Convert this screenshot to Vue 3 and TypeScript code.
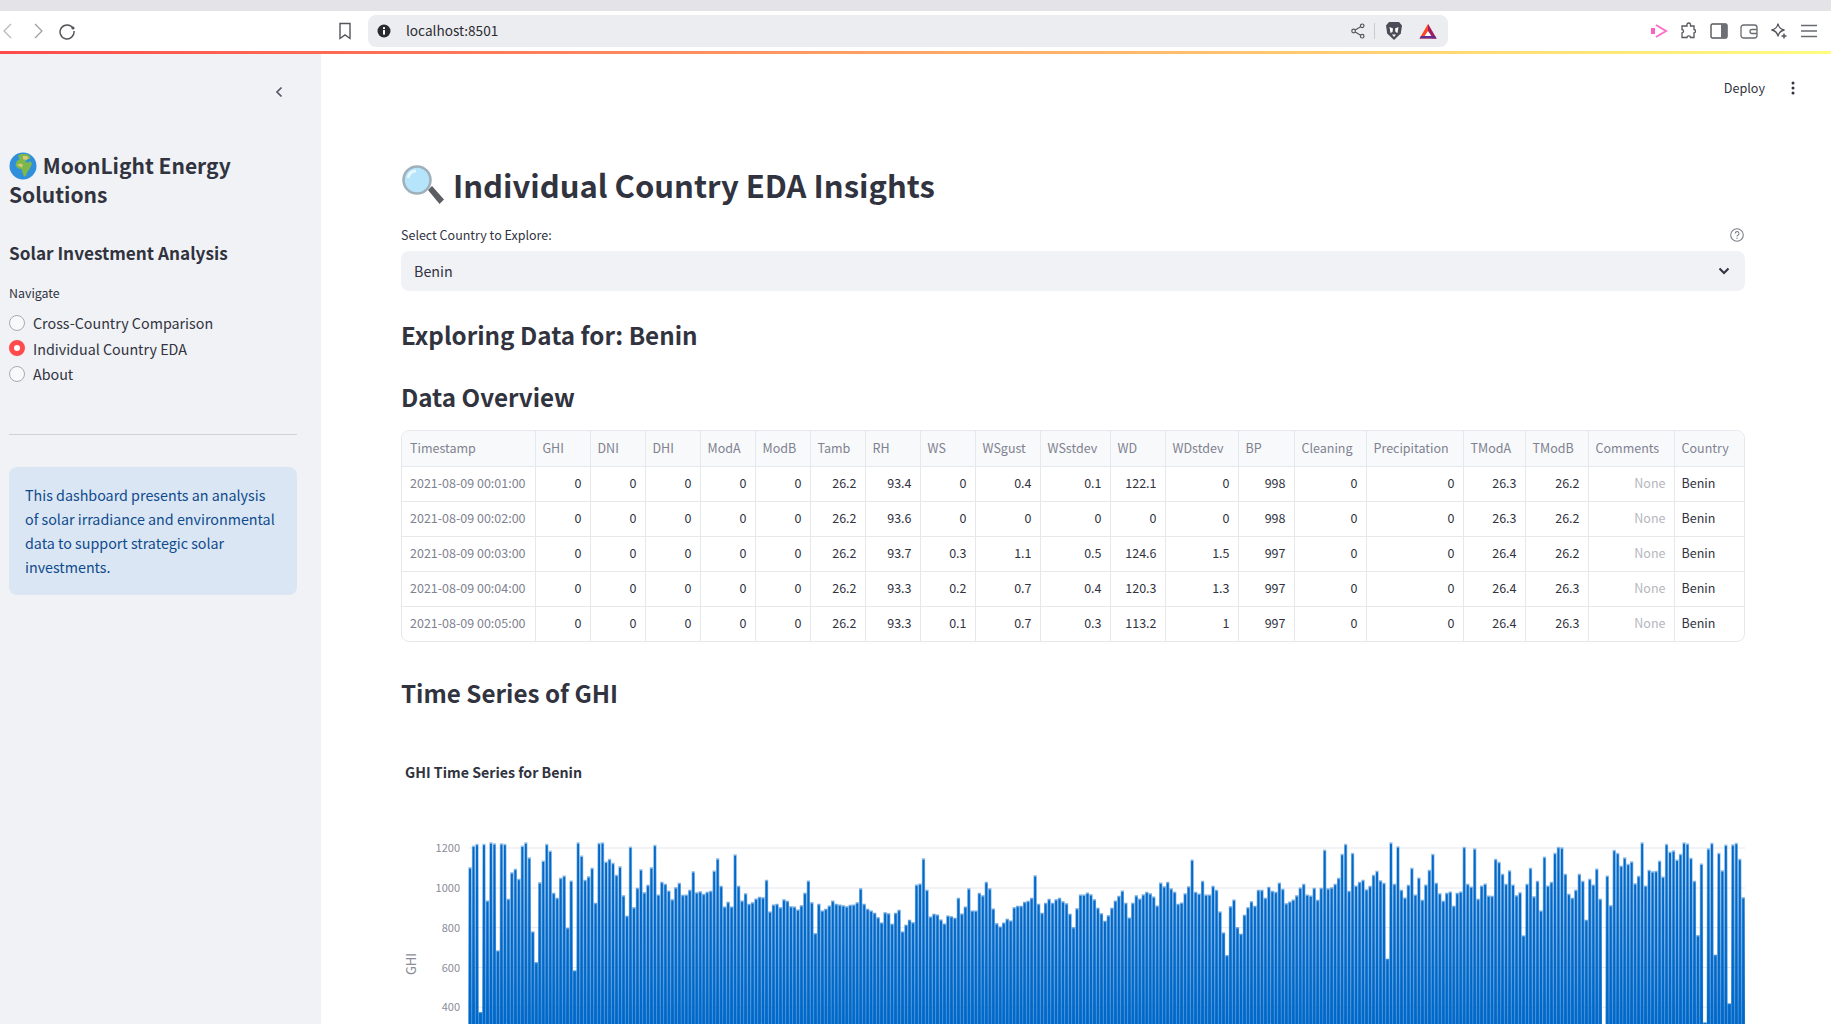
<template>
  <div class="page">
    <div class="tab-strip"></div>
    <header class="toolbar">
      <svg class="tb-icon nav-first" width="16" height="18" viewBox="0 0 16 18"><path d="M11 2 4 9l7 7" fill="none" stroke="#b5b6bb" stroke-width="1.2" /></svg>
      <svg class="tb-icon nav-next" width="16" height="18" viewBox="0 0 16 18"><path d="m5 2 7 7-7 7" fill="none" stroke="#9b9ca1" stroke-width="1.2" /></svg>
      <svg class="tb-icon nav-reload" width="18" height="18" viewBox="0 0 18 18"><path d="M15 6.2A7 7 0 1 0 16 9" fill="none" stroke="#55565c" stroke-width="1.5" /><circle cx="15" cy="6" r="1.6" fill="#55565c" /></svg>
      <svg class="tb-icon nav-mark" width="14" height="18" viewBox="0 0 14 18"><path d="M2 1.5h10v15l-5-3.6-5 3.6z" fill="none" stroke="#55565c" stroke-width="1.4" /></svg>
      <div class="url-bar">
        <svg width="14" height="14" viewBox="0 0 14 14"><circle cx="7" cy="7" r="6.5" fill="#2a2b30" /><rect x="6" y="6" width="2" height="4.6" fill="#fff" /><rect x="6" y="3.2" width="2" height="1.8" fill="#fff" /></svg>
        <span class="url-text">localhost:8501</span>
        <svg class="share" width="14" height="16" viewBox="0 0 14 16"><g fill="none" stroke="#55565c" stroke-width="1.2"><circle cx="2.6" cy="8" r="1.8" /><circle cx="11.2" cy="2.8" r="1.8" /><circle cx="11.2" cy="13.2" r="1.8" /><path d="m4.2 7 5.4-3.2M4.2 9l5.4 3.2" /></g></svg>
        <span class="url-sep"></span>
        <svg class="lion" width="18" height="20" viewBox="0 0 18 20"><path d="M4 1h10l3 3.5-1.2 8L9 19 2.2 12.5 1 4.5z" fill="#4a4c57" /><path d="M4.500 6 8 7.500 7.500 11 5.500 12zM13.500 6 10 7.500l.5 3.500 2 1zM7 13.500h4l-2 2.500z" fill="#fff" /></svg>
        <svg class="bat" width="18" height="17" viewBox="0 0 18 17"><path d="M9 1 0.5 15.500h17z" fill="#ff4724" /><path d="M9 1 17.500 15.500H13L9 8.500z" fill="#9e1f63" /><path d="M0.500 15.500h17L16 13H2z" fill="#662d91" /><path d="M9 8 5.600 13h6.800z" fill="#fff" /></svg>
      </div>
      <div class="tb-right">
        <svg width="18" height="16" viewBox="0 0 18 16"><rect x="1" y="5" width="4" height="6" fill="#ff5fc0" /><path d="M6 2 16 8 6 14" fill="none" stroke="#ff6fc8" stroke-width="2" /></svg>
        <svg width="18" height="18" viewBox="0 0 18 18"><path d="M7 2.500c0-2 3.500-2 3.500 0V4H14v3.500c2 0 2 3.500 0 3.500v4.500H10.500c0-2.200-3.500-2.200-3.500 0H2V11c2 0 2-3.500 0-3.500V4h5z" fill="none" stroke="#55565c" stroke-width="1.3" /></svg>
        <svg width="18" height="16" viewBox="0 0 18 16"><rect x="1" y="1" width="16" height="14" rx="1.500" fill="#fff" stroke="#55565c" stroke-width="1.4" /><rect x="11" y="1" width="6" height="14" fill="#6e6f75" /></svg>
        <svg width="18" height="16" viewBox="0 0 18 16"><rect x="1" y="2" width="16" height="13" rx="2.500" fill="none" stroke="#6a6b71" stroke-width="1.3" /><path d="M17 6.500h-5a2 2 0 0 0 0 4h5" fill="none" stroke="#6a6b71" stroke-width="1.3" /></svg>
        <svg width="18" height="18" viewBox="0 0 18 18"><path d="M8 1.500c.6 4 2.400 5.800 6.500 6.500-4 .7-5.900 2.500-6.500 6.500C7.400 10.500 5.500 8.700 1.500 8 5.500 7.300 7.400 5.500 8 1.500z" fill="none" stroke="#55565c" stroke-width="1.3" /><path d="M14 11.500v5M11.500 14h5" stroke="#55565c" stroke-width="1.5" /></svg>
        <svg width="18" height="14" viewBox="0 0 18 14"><path d="M1 1.500h16M1 7h16M1 12.500h16" stroke="#6a6b71" stroke-width="1.6" /></svg>
      </div>
    </header>
    <div class="decoration"></div>

    <div class="app">
      <aside class="sidebar">
        <div class="collapse-row">
          <svg width="12" height="14" viewBox="0 0 12 14"><path d="M8.500 2.500 4 7l4.500 4.500" fill="none" stroke="#555867" stroke-width="1.7" /></svg>
        </div>
        <h2 class="brand">
          <svg class="globe" width="28" height="28" viewBox="0 0 28 28">
            <circle cx="14" cy="14" r="13.500" fill="#2f8fdb" />
            <path d="M9 3.500c3-1.800 8-2 11.500 0l1 3-3.500 1-2 2.500 3.500.5 2-1.500 1.500 3-2.500 5-2.500 3.500-1 3.500-2 .5-1.500-4-1-3.500-3.500-.5-2.500-3 1-4 3-2.500-1-2.500z" fill="#7fb84a" />
            <path d="M14 4h4l1.500 2.500-2.500 1.500-3-1zM8 13l3-1.500 3 1-1 3z" fill="#d9c77a" />
          </svg>
          MoonLight Energy Solutions
        </h2>
        <h3 class="subtitle">Solar Investment Analysis</h3>
        <div class="nav-label">Navigate</div>
        <label v-for="item in navItems" :key="item" class="radio-row">
          <span class="radio" :class="{ on: item === activeNav }"></span>
          {{ item }}
        </label>
        <hr class="side-rule" />
        <div class="info-box">
          This dashboard presents an analysis of solar irradiance and environmental data to support strategic solar investments.
        </div>
      </aside>

      <main class="main">
        <div class="top-actions">
          <span class="deploy">Deploy</span>
          <svg width="4" height="14" viewBox="0 0 4 14"><circle cx="2" cy="2" r="1.5" fill="#31333f" /><circle cx="2" cy="7" r="1.5" fill="#31333f" /><circle cx="2" cy="12" r="1.5" fill="#31333f" /></svg>
        </div>

        <h1 class="page-title">
          <svg width="44" height="40" viewBox="0 0 44 40">
            <path d="m27 25 4-4 12 13.500-4.500 4.500z" fill="#5a5d62" />
            <circle cx="16" cy="15" r="13.500" fill="#b6e4fb" stroke="#9fb0ba" stroke-width="2.5" />
            <path d="M7 13c1-4 4-7 8-7" fill="none" stroke="#e6f7ff" stroke-width="3" />
          </svg>
          Individual Country EDA Insights
        </h1>

        <div class="select-label">
          <span>Select Country to Explore:</span>
          <svg width="14" height="14" viewBox="0 0 14 14"><circle cx="7" cy="7" r="6.300" fill="none" stroke="#7d7f88" stroke-width="1.1" /><path d="M5.200 5.500a1.900 1.900 0 1 1 2.700 1.700c-.6.300-.9.700-.9 1.300" fill="none" stroke="#7d7f88" stroke-width="1.1" /><circle cx="7" cy="10.300" r=".7" fill="#7d7f88" /></svg>
        </div>
        <div class="select-box">
          <span>Benin</span>
          <svg width="12" height="8" viewBox="0 0 12 8"><path d="m1.500 1.500 4.500 4.500 4.500-4.500" fill="none" stroke="#31333f" stroke-width="2" /></svg>
        </div>

        <h2 class="section first">Exploring Data for: Benin</h2>
        <h2 class="section second">Data Overview</h2>

        <div class="table-wrap">
          <table class="data-table">
            <colgroup>
              <col v-for="c in columns" :key="c.name" :style="{ width: c.width + 'px' }" />
            </colgroup>
            <thead>
              <tr>
                <th v-for="c in columns" :key="c.name">{{ c.name }}</th>
              </tr>
            </thead>
            <tbody>
              <tr v-for="row in rows" :key="row[0]">
                <td v-for="(cell, i) in row" :key="i" :class="cellClass(i, cell)">{{ cell }}</td>
              </tr>
            </tbody>
          </table>
        </div>

        <h2 class="section third">Time Series of GHI</h2>
        <div class="chart-title">GHI Time Series for Benin</div>

        <svg class="chart" width="1344" height="240" viewBox="0 0 1344 240">
          <defs>
            <linearGradient id="paleBar" gradientUnits="userSpaceOnUse" x1="0" y1="30" x2="0" y2="224">
              <stop offset="0" stop-color="#0068c9" stop-opacity="0.35" />
              <stop offset="0.5" stop-color="#0068c9" stop-opacity="0.65" />
              <stop offset="1" stop-color="#0068c9" stop-opacity="0.95" />
            </linearGradient>
          </defs>
          <line v-for="t in ticks" :key="t.label" x1="68" x2="1344" :y1="t.y" :y2="t.y" class="grid" />
          <text v-for="t in ticks" :key="'l' + t.label" x="59" :y="t.y + 4" text-anchor="end" class="tick">{{ t.label }}</text>
          <text class="axis" transform="translate(15 163) rotate(-90)" text-anchor="middle">GHI</text>
          <path :d="paleBars" fill="url(#paleBar)" />
          <path :d="solidBars" fill="#0068c9" />
        </svg>
      </main>
    </div>
  </div>
</template>

<script setup lang="ts">
import { computed } from 'vue'

const navItems = ['Cross-Country Comparison', 'Individual Country EDA', 'About']
const activeNav = 'Individual Country EDA'

const columns = [
  { name: 'Timestamp', width: 133 },
  { name: 'GHI', width: 55 },
  { name: 'DNI', width: 55 },
  { name: 'DHI', width: 55 },
  { name: 'ModA', width: 55 },
  { name: 'ModB', width: 55 },
  { name: 'Tamb', width: 55 },
  { name: 'RH', width: 55 },
  { name: 'WS', width: 55 },
  { name: 'WSgust', width: 65 },
  { name: 'WSstdev', width: 70 },
  { name: 'WD', width: 55 },
  { name: 'WDstdev', width: 73 },
  { name: 'BP', width: 56 },
  { name: 'Cleaning', width: 72 },
  { name: 'Precipitation', width: 97 },
  { name: 'TModA', width: 62 },
  { name: 'TModB', width: 63 },
  { name: 'Comments', width: 86 },
  { name: 'Country', width: 70 }
]

const rows = [
  ['2021-08-09 00:01:00', '0', '0', '0', '0', '0', '26.2', '93.4', '0', '0.4', '0.1', '122.1', '0', '998', '0', '0', '26.3', '26.2', 'None', 'Benin'],
  ['2021-08-09 00:02:00', '0', '0', '0', '0', '0', '26.2', '93.6', '0', '0', '0', '0', '0', '998', '0', '0', '26.3', '26.2', 'None', 'Benin'],
  ['2021-08-09 00:03:00', '0', '0', '0', '0', '0', '26.2', '93.7', '0.3', '1.1', '0.5', '124.6', '1.5', '997', '0', '0', '26.4', '26.2', 'None', 'Benin'],
  ['2021-08-09 00:04:00', '0', '0', '0', '0', '0', '26.2', '93.3', '0.2', '0.7', '0.4', '120.3', '1.3', '997', '0', '0', '26.4', '26.3', 'None', 'Benin'],
  ['2021-08-09 00:05:00', '0', '0', '0', '0', '0', '26.2', '93.3', '0.1', '0.7', '0.3', '113.2', '1', '997', '0', '0', '26.4', '26.3', 'None', 'Benin']
]

const cellClass = (i: number, cell: string) => {
  if (i === 0) return 'stamp'
  if (i === 19) return 'text'
  if (cell === 'None') return 'none'
  return ''
}

const ticks = [
  { label: '1200', y: 47 },
  { label: '1000', y: 87 },
  { label: '800', y: 126.7 },
  { label: '600', y: 166.5 },
  { label: '400', y: 206.2 }
]

// daily peak tops, measured off the plot at 3x
const tops = [
  140, 75, 70, 575, 70, 240, 65, 68, 390, 68, 70, 235, 155, 145, 175, 75, 65, 110, 333, 425, 185, 120, 70, 90, 217, 232, 172, 165, 322, 180, 450,
  65, 105, 178, 167, 142, 247, 67, 65, 123, 115, 127, 163, 137, 224, 286, 78, 260, 202, 146, 215, 193, 140, 73, 222, 184, 190, 210, 236, 200, 187,
  223, 222, 208, 152, 215, 212, 220, 214, 211, 150, 113, 196, 258, 244, 258, 101, 196, 240, 218, 250, 245, 234, 229, 230, 178, 273, 252, 250, 260,
  236, 241, 257, 258, 267, 254, 217, 180, 245, 338, 250, 270, 265, 255, 240, 250, 252, 254, 257, 253, 252, 245, 203, 250, 265, 270, 277, 290, 306,
  275, 278, 310, 277, 268, 333, 313, 298, 305, 192, 189, 113, 208, 288, 280, 282, 297, 309, 285, 287, 292, 232, 279, 258, 203, 270, 270, 217, 224,
  184, 203, 264, 308, 318, 306, 295, 300, 260, 256, 256, 244, 241, 232, 164, 250, 277, 247, 235, 247, 236, 232, 242, 248, 280, 320, 263, 222, 222,
  216, 221, 236, 262, 278, 301, 284, 262, 240, 226, 210, 247, 291, 247, 224, 234, 221, 214, 218, 228, 255, 186, 197, 184, 203, 214, 250, 246, 218,
  197, 117, 214, 219, 181, 222, 222, 196, 208, 273, 336, 404, 257, 237, 320, 340, 283, 260, 242, 256, 208, 208, 232, 199, 211, 214, 186, 205, 248,
  243, 237, 224, 201, 190, 222, 225, 202, 238, 202, 87, 203, 200, 190, 172, 100, 70, 211, 97, 195, 184, 178, 206, 196, 163, 151, 179, 187, 415, 65,
  190, 77, 208, 231, 193, 142, 222, 171, 238, 192, 148, 100, 187, 218, 241, 217, 213, 256, 217, 213, 79, 190, 198, 83, 235, 195, 189, 225, 226, 115,
  124, 160, 190, 149, 192, 224, 215, 345, 190, 142, 227, 181, 270, 108, 195, 184, 97, 79, 80, 160, 220, 232, 208, 160, 181, 298, 175, 192, 144, 235,
  612, 165, 254, 88, 97, 135, 110, 130, 122, 188, 166, 65, 195, 148, 152, 151, 120, 168, 70, 93, 89, 117, 100, 65, 68, 112, 181, 344, 129, 606, 83,
  67, 403, 97, 149, 72, 549, 71, 67, 115, 230
]

const barPath = (width: number, lift: number) => {
  const step = (1342.3 - 69) / (tops.length - 1)
  return tops
    .map((v, i) => {
      const x = 69 + i * step - width / 2
      const y = 20 + v / 3 - lift
      return `M${x.toFixed(2)} ${y.toFixed(1)}h${width}V240h-${width}z`
    })
    .join('')
}

const paleBars = computed(() => barPath(3.3, 0.5))
const solidBars = computed(() => barPath(1.9, -1))
</script>

<style>
html,
body {
  margin: 0;
  height: 100%;
  overflow: hidden;
  background: #fff;
}
</style>

<style scoped>
.page {
  height: 1024px;
  display: flex;
  flex-direction: column;
  overflow: hidden;
  font-family: "Noto Sans CJK SC", "Noto Sans", sans-serif;
  color: #31333f;
}

.tab-strip {
  height: 11px;
  background: #e3e3e8;
}

.toolbar {
  height: 40px;
  background: #fff;
  display: flex;
  align-items: center;
  flex: none;
}

.tb-icon {
  flex: none;
}

.nav-next {
  margin-left: 14px;
}

.nav-reload {
  margin-left: 12px;
}

.nav-mark {
  margin-left: 262px;
}

.url-bar {
  margin-left: 16px;
  width: 1080px;
  height: 32px;
  border-radius: 8px;
  background: #ecedf1;
  display: flex;
  align-items: center;
  padding-left: 9px;
  box-sizing: border-box;
  flex: none;
}

.url-text {
  margin-left: 15px;
  padding-bottom: 1px;
  font-size: 13.6px;
  color: #2a2b30;
  line-height: 19px;
}

.share {
  margin-left: auto;
}

.url-sep {
  width: 1px;
  height: 16px;
  background: #c9cacf;
  margin: 0 10px 0 9px;
}

.lion {
  margin-right: 16px;
}

.bat {
  margin-right: 11px;
}

.tb-right {
  margin-left: auto;
  width: 168px;
  margin-right: 13px;
  display: flex;
  justify-content: space-between;
  align-items: center;
}

.decoration {
  height: 3px;
  flex: none;
  background: linear-gradient(90deg, #ff4b4b, #fffd80);
}

.app {
  flex: 1;
  display: flex;
  min-height: 0;
}

.sidebar {
  width: 321px;
  flex: none;
  box-sizing: border-box;
  background: #f0f2f6;
  padding: 0 24px 0 9px;
}

.collapse-row {
  height: 76px;
  display: flex;
  align-items: center;
  justify-content: flex-end;
  margin-right: 12px;
}

.brand {
  margin: 21px 0 0;
  font-size: 21px;
  line-height: 29px;
  font-weight: 600;
}

.globe {
  vertical-align: -3px;
  margin: -5px 1px -3px 0;
}

.subtitle {
  margin: 31px 0 0;
  font-size: 17.2px;
  line-height: 26px;
  font-weight: 600;
}

.nav-label {
  margin-top: 17px;
  font-size: 12.4px;
  line-height: 20px;
}

.radio-row {
  display: flex;
  align-items: center;
  gap: 8px;
  height: 25.5px;
  font-size: 14.3px;
}

.nav-label + .radio-row {
  margin-top: 7px;
}

.radio {
  width: 16px;
  height: 16px;
  box-sizing: border-box;
  border-radius: 50%;
  border: 1px solid #a9aab1;
  background: #f8f9fb;
  flex: none;
}

.radio.on {
  background: #fff;
  border: 5px solid #ff4b4b;
}

.side-rule {
  margin: 47px 0 32px;
  border: 0;
  border-top: 1px solid #cfd1d7;
}

.info-box {
  background: #dae6f3;
  color: #0f4a8c;
  border-radius: 8px;
  padding: 16px;
  font-size: 14.3px;
  line-height: 24px;
}

.main {
  flex: 1;
  min-width: 0;
  padding: 0 86px 0 80px;
}

.top-actions {
  height: 68px;
  margin-right: -50px;
  display: flex;
  align-items: center;
  justify-content: flex-end;
  gap: 26px;
}

.deploy {
  font-size: 12.6px;
  line-height: 20px;
}

.page-title {
  margin: 39px 0 0;
  display: flex;
  align-items: center;
  gap: 8px;
  font-size: 31px;
  line-height: 48px;
  font-weight: 600;
}

.select-label {
  margin-top: 16px;
  display: flex;
  justify-content: space-between;
  align-items: center;
  padding-right: 1px;
  font-size: 12.5px;
  line-height: 20px;
}

.select-box {
  margin-top: 6px;
  height: 40px;
  background: #f0f2f6;
  border-radius: 8px;
  padding: 0 15px 0 13px;
  display: flex;
  justify-content: space-between;
  align-items: center;
  font-size: 14.3px;
}

.select-box span {
  padding-bottom: 2px;
}

.section {
  margin: 0;
  font-size: 24.2px;
  line-height: 36px;
  font-weight: 600;
}

.section.first {
  margin-top: 26px;
}

.section.second {
  margin-top: 26px;
}

.section.third {
  margin-top: 33px;
}

.table-wrap {
  margin-top: 15px;
  border: 1px solid #e6e8ec;
  border-radius: 8px;
  overflow: hidden;
  box-sizing: border-box;
  height: 212px;
}

.data-table {
  border-collapse: collapse;
  table-layout: fixed;
  width: 100%;
  font-size: 12.5px;
  font-weight: 400;
}

.data-table th {
  height: 33px;
  padding: 0 8px 2px 7px;
  background: #f8f9fb;
  color: #7f8290;
  font-weight: 400;
  text-align: left;
  border-right: 1px solid #e6e8ec;
  border-bottom: 1px solid #e6e8ec;
  white-space: nowrap;
  overflow: hidden;
}

.data-table th:first-child {
  padding-left: 8px;
}

.data-table td {
  height: 31px;
  padding: 0 8px 3px;
  text-align: right;
  border-right: 1px solid #e6e8ec;
  border-bottom: 1px solid #e6e8ec;
  white-space: nowrap;
  overflow: hidden;
}

.data-table tr > :last-child {
  border-right: 0;
}

.data-table tbody tr:last-child td {
  border-bottom: 0;
}

.data-table td.stamp {
  color: #7f8290;
  text-align: left;
}

.data-table td.text {
  text-align: left;
  padding-left: 7px;
}

.data-table td.none {
  color: #b5b6bd;
}

.chart-title {
  margin: 51px 0 0 4px;
  font-size: 14.2px;
  line-height: 20px;
  font-weight: 700;
}

.chart {
  display: block;
  margin-top: 19px;
}

.grid {
  stroke: #e6e7ee;
  stroke-width: 1;
}

.tick {
  font-size: 11px;
  fill: #8a8c98;
}

.axis {
  font-size: 13px;
  fill: #8a8c98;
}
</style>
